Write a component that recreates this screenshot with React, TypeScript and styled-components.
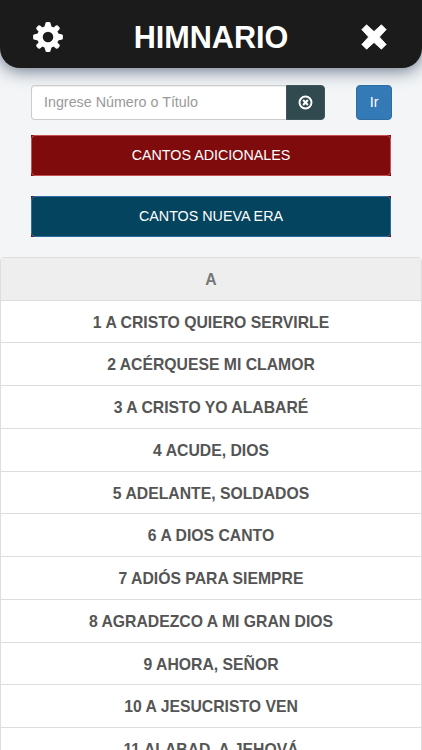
import React from "react";
import styled, { createGlobalStyle } from "styled-components";

const Global = createGlobalStyle`
  * { box-sizing: border-box; }
  html, body { margin: 0; padding: 0; height: 750px; overflow: hidden; }
  body {
    background: #f3f5f7;
    font-family: "Liberation Sans", Arial, sans-serif;
    font-size: 14.3px;
  }
  button, input { font: inherit; margin: 0; }
`;

const Page = styled.div`
  height: 750px;
  overflow: hidden;
`;

const Header = styled.header`
  height: 67.5px;
  padding: 7px 33px 0;
  display: grid;
  grid-template-columns: 30px 1fr 30px;
  align-items: center;
  background: #1b1b1b;
  border-radius: 0 0 20px 20px;
  box-shadow: 0 2px 18px #5c6b7f;
`;

const Title = styled.h1`
  margin: 0;
  color: #fff;
  font-size: 30.6px;
  line-height: 36px;
  text-align: center;
`;

const IconButton = styled.button`
  display: flex;
  justify-content: center;
  width: 30px;
  padding: 0;
  border: 0;
  color: #fff;
  background: none;
`;

const Controls = styled.section`
  padding: 17.5px 30px 0;
`;

const SearchRow = styled.div`
  display: flex;
  align-items: stretch;
  height: 34.5px;
`;

const SearchInput = styled.input`
  width: 255px;
  padding: 0 12px;
  border: 1px solid #ccc;
  border-right: 0;
  border-radius: 4px 0 0 4px;
  background: #fff;
  color: #555;
  box-shadow: inset 0 1px 1px rgba(0, 0, 0, 0.075);
  margin-left: 1px;
  &::placeholder { color: #999; opacity: 1; }
`;

const ClearButton = styled.button`
  display: flex;
  align-items: center;
  justify-content: center;
  width: 39.5px;
  padding: 0;
  border: 1px solid #3f5559;
  border-radius: 0 4px 4px 0;
  background: #304a50;
  color: #fff;
`;

const GoButton = styled.button`
  width: 36px;
  margin-left: 31px;
  padding: 0;
  border: 1px solid #2e6da4;
  border-radius: 4px;
  background: #337ab7;
  color: #fff;
`;

const LinkFrame = styled.div<{ $gap: number }>`
  width: 360px;
  height: 41px;
  margin: ${(p) => p.$gap}px 0 0 1px;
  background: #760b14;
`;

const LinkButton = styled.button<{ $fill: string; $edge: string }>`
  display: block;
  width: 100%;
  height: 100%;
  padding: 0;
  border: 1px solid ${(p) => p.$edge};
  border-radius: 4px;
  background: ${(p) => p.$fill};
  color: #fff;
`;

const List = styled.ul`
  margin: 20px 0 0;
  padding: 0;
  list-style: none;
  border: 1px solid #ddd;
  border-radius: 4px 4px 0 0;
  overflow: hidden;
  background: #fff;
`;

const Item = styled.li<{ $heading?: boolean }>`
  height: ${(p) => (p.$heading ? 43 : 42.75)}px;
  border-bottom: 1px solid #ddd;
  background: ${(p) => (p.$heading ? "#eee" : "#fff")};
  color: ${(p) => (p.$heading ? "#777" : "#555")};
  font-size: 15.75px;
  font-weight: bold;
  line-height: 43px;
  text-align: center;
  white-space: nowrap;
`;

const HYMNS = [
  "A CRISTO QUIERO SERVIRLE",
  "ACÉRQUESE MI CLAMOR",
  "A CRISTO YO ALABARÉ",
  "ACUDE, DIOS",
  "ADELANTE, SOLDADOS",
  "A DIOS CANTO",
  "ADIÓS PARA SIEMPRE",
  "AGRADEZCO A MI GRAN DIOS",
  "AHORA, SEÑOR",
  "A JESUCRISTO VEN",
  "ALABAD, A JEHOVÁ",
];

const Cog = () => (
  <svg width="30" height="30" viewBox="-15 -15 30 30" fill="currentColor">
    <circle r="8.1" fill="none" stroke="currentColor" strokeWidth="5.6" />
    {[0, 90, 180, 270].map((a) => (
      <g key={a} transform={`rotate(${a})`}>
        <path d="M-3.6 -10 L-2.4 -14.2 Q-2.1 -14.9 -1.4 -14.9 H1.4 Q2.1 -14.9 2.4 -14.2 L3.6 -10Z" />
        <path transform="rotate(45)" d="M-2.7 -9.5 V-13 Q-2.7 -14.9 -1.2 -14.9 H1.2 Q2.7 -14.9 2.7 -13 V-9.5Z" />
      </g>
    ))}
  </svg>
);

const Cross = () => (
  <svg width="26" height="26" viewBox="-13 -13 26 26" fill="currentColor">
    <path
      d="M-7.4 -12.2 L0 -5.4 L7.4 -12.2 L12.2 -7.4 L5.4 0 L12.2 7.4 L7.4 12.2 L0 5.4 L-7.4 12.2 L-12.2 7.4 L-5.4 0 L-12.2 -7.4Z"
      stroke="currentColor"
      strokeWidth=".8"
      strokeLinejoin="round"
    />
  </svg>
);

const RemoveCircle = () => (
  <svg width="15" height="15" viewBox="-7.5 -7.5 15 15" fill="none" stroke="currentColor">
    <circle r="6" strokeWidth="1.9" />
    <path d="M-2.4 -2.4 L2.4 2.4 M2.4 -2.4 L-2.4 2.4" strokeWidth="2.1" />
  </svg>
);

export default function App() {
  return (
    <Page>
      <Global />
      <Header>
        <IconButton aria-label="Ajustes"><Cog /></IconButton>
        <Title>HIMNARIO</Title>
        <IconButton aria-label="Cerrar"><Cross /></IconButton>
      </Header>
      <Controls>
        <SearchRow>
          <SearchInput placeholder="Ingrese Número o Título" />
          <ClearButton aria-label="Borrar"><RemoveCircle /></ClearButton>
          <GoButton>Ir</GoButton>
        </SearchRow>
        <LinkFrame $gap={15}>
          <LinkButton $fill="#800b0d" $edge="#c95050">CANTOS ADICIONALES</LinkButton>
        </LinkFrame>
        <LinkFrame $gap={20}>
          <LinkButton $fill="#05445e" $edge="#2e6da4">CANTOS NUEVA ERA</LinkButton>
        </LinkFrame>
      </Controls>
      <List>
        <Item $heading>A</Item>
        {HYMNS.map((name, i) => (
          <Item key={name}>{i + 1} {name}</Item>
        ))}
      </List>
    </Page>
  );
}
